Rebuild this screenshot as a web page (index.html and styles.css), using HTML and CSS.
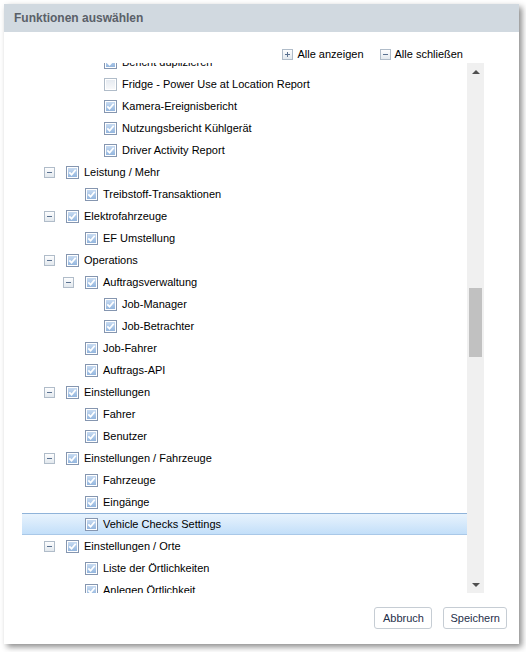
FILE: index.html
```html
<!DOCTYPE html>
<html lang="de">
<head>
<meta charset="utf-8">
<title>Funktionen auswählen</title>
<link rel="stylesheet" href="styles.css">
</head>
<body>
<svg class="defs" width="0" height="0" aria-hidden="true">
  <defs>
    <linearGradient id="g-on" x1="0" y1="0" x2="0" y2="1">
      <stop offset="0" stop-color="#c6daf1"/>
      <stop offset="1" stop-color="#94b6de"/>
    </linearGradient>
    <linearGradient id="g-off" x1="0" y1="0" x2="0" y2="1">
      <stop offset="0" stop-color="#e6ebf1"/>
      <stop offset="1" stop-color="#f7f8fa"/>
    </linearGradient>
    <linearGradient id="g-exp" x1="0" y1="0" x2="0" y2="1">
      <stop offset="0" stop-color="#ffffff"/>
      <stop offset="1" stop-color="#e1e7ed"/>
    </linearGradient>
    <symbol id="cb-on" viewBox="0 0 13 13">
      <rect x="0.5" y="0.5" width="12" height="12" fill="#fff" stroke="#8596b0"/>
      <rect x="2" y="2" width="9" height="9" fill="url(#g-on)"/>
      <path d="M3.3 6.3 L5.6 8.7 L9.7 3.7" stroke="#fff" stroke-width="1.8" fill="none"/>
    </symbol>
    <symbol id="cb-off" viewBox="0 0 13 13">
      <rect x="0.5" y="0.5" width="12" height="12" fill="#fff" stroke="#b0bcc9"/>
      <rect x="2" y="2" width="9" height="9" fill="url(#g-off)"/>
    </symbol>
    <symbol id="ex-minus" viewBox="0 0 11 11">
      <rect x="0.5" y="0.5" width="10" height="10" fill="url(#g-exp)" stroke="#b0bcc9"/>
      <path d="M3 5.5 H8" stroke="#5a7190" stroke-width="1"/>
    </symbol>
    <symbol id="ex-plus" viewBox="0 0 11 11">
      <rect x="0.5" y="0.5" width="10" height="10" fill="url(#g-exp)" stroke="#b0bcc9"/>
      <path d="M3 5.5 H8 M5.5 3 V8" stroke="#5a7190" stroke-width="1"/>
    </symbol>
  </defs>
</svg>

<div class="dialog">
  <div class="dlg-header">Funktionen auswählen</div>

  <div class="toolbar">
    <span class="tool"><svg class="ex" viewBox="0 0 11 11"><use href="#ex-plus"/></svg>Alle anzeigen</span>
    <span class="tool"><svg class="ex" viewBox="0 0 11 11"><use href="#ex-minus"/></svg>Alle schließen</span>
  </div>

  <div class="tree-wrap">
    <div class="tree-view">
      <ul class="tree">
        <li class="row l2"><span class="slot"></span><svg class="cb" viewBox="0 0 13 13"><use href="#cb-on"/></svg><span class="label">Bericht duplizieren</span></li>
        <li class="row l2"><span class="slot"></span><svg class="cb" viewBox="0 0 13 13"><use href="#cb-off"/></svg><span class="label">Fridge - Power Use at Location Report</span></li>
        <li class="row l2"><span class="slot"></span><svg class="cb" viewBox="0 0 13 13"><use href="#cb-on"/></svg><span class="label">Kamera-Ereignisbericht</span></li>
        <li class="row l2"><span class="slot"></span><svg class="cb" viewBox="0 0 13 13"><use href="#cb-on"/></svg><span class="label">Nutzungsbericht Kühlgerät</span></li>
        <li class="row l2"><span class="slot"></span><svg class="cb" viewBox="0 0 13 13"><use href="#cb-on"/></svg><span class="label">Driver Activity Report</span></li>
        <li class="row l0"><span class="slot"><svg class="ex" viewBox="0 0 11 11"><use href="#ex-minus"/></svg></span><svg class="cb" viewBox="0 0 13 13"><use href="#cb-on"/></svg><span class="label">Leistung / Mehr</span></li>
        <li class="row l1"><span class="slot"></span><svg class="cb" viewBox="0 0 13 13"><use href="#cb-on"/></svg><span class="label">Treibstoff-Transaktionen</span></li>
        <li class="row l0"><span class="slot"><svg class="ex" viewBox="0 0 11 11"><use href="#ex-minus"/></svg></span><svg class="cb" viewBox="0 0 13 13"><use href="#cb-on"/></svg><span class="label">Elektrofahrzeuge</span></li>
        <li class="row l1"><span class="slot"></span><svg class="cb" viewBox="0 0 13 13"><use href="#cb-on"/></svg><span class="label">EF Umstellung</span></li>
        <li class="row l0"><span class="slot"><svg class="ex" viewBox="0 0 11 11"><use href="#ex-minus"/></svg></span><svg class="cb" viewBox="0 0 13 13"><use href="#cb-on"/></svg><span class="label">Operations</span></li>
        <li class="row l1"><span class="slot"><svg class="ex" viewBox="0 0 11 11"><use href="#ex-minus"/></svg></span><svg class="cb" viewBox="0 0 13 13"><use href="#cb-on"/></svg><span class="label">Auftragsverwaltung</span></li>
        <li class="row l2"><span class="slot"></span><svg class="cb" viewBox="0 0 13 13"><use href="#cb-on"/></svg><span class="label">Job-Manager</span></li>
        <li class="row l2"><span class="slot"></span><svg class="cb" viewBox="0 0 13 13"><use href="#cb-on"/></svg><span class="label">Job-Betrachter</span></li>
        <li class="row l1"><span class="slot"></span><svg class="cb" viewBox="0 0 13 13"><use href="#cb-on"/></svg><span class="label">Job-Fahrer</span></li>
        <li class="row l1"><span class="slot"></span><svg class="cb" viewBox="0 0 13 13"><use href="#cb-on"/></svg><span class="label">Auftrags-API</span></li>
        <li class="row l0"><span class="slot"><svg class="ex" viewBox="0 0 11 11"><use href="#ex-minus"/></svg></span><svg class="cb" viewBox="0 0 13 13"><use href="#cb-on"/></svg><span class="label">Einstellungen</span></li>
        <li class="row l1"><span class="slot"></span><svg class="cb" viewBox="0 0 13 13"><use href="#cb-on"/></svg><span class="label">Fahrer</span></li>
        <li class="row l1"><span class="slot"></span><svg class="cb" viewBox="0 0 13 13"><use href="#cb-on"/></svg><span class="label">Benutzer</span></li>
        <li class="row l0"><span class="slot"><svg class="ex" viewBox="0 0 11 11"><use href="#ex-minus"/></svg></span><svg class="cb" viewBox="0 0 13 13"><use href="#cb-on"/></svg><span class="label">Einstellungen / Fahrzeuge</span></li>
        <li class="row l1"><span class="slot"></span><svg class="cb" viewBox="0 0 13 13"><use href="#cb-on"/></svg><span class="label">Fahrzeuge</span></li>
        <li class="row l1"><span class="slot"></span><svg class="cb" viewBox="0 0 13 13"><use href="#cb-on"/></svg><span class="label">Eingänge</span></li>
        <li class="row l1 selected"><span class="slot"></span><svg class="cb" viewBox="0 0 13 13"><use href="#cb-on"/></svg><span class="label">Vehicle Checks Settings</span></li>
        <li class="row l0"><span class="slot"><svg class="ex" viewBox="0 0 11 11"><use href="#ex-minus"/></svg></span><svg class="cb" viewBox="0 0 13 13"><use href="#cb-on"/></svg><span class="label">Einstellungen / Orte</span></li>
        <li class="row l1"><span class="slot"></span><svg class="cb" viewBox="0 0 13 13"><use href="#cb-on"/></svg><span class="label">Liste der Örtlichkeiten</span></li>
        <li class="row l1"><span class="slot"></span><svg class="cb" viewBox="0 0 13 13"><use href="#cb-on"/></svg><span class="label">Anlegen Örtlichkeit</span></li>
      </ul>
    </div>
    <div class="scrollbar">
      <div class="sb-btn"><span class="arrow-up"></span></div>
      <div class="sb-track">
        <div class="sb-space-top"></div>
        <div class="sb-thumb"></div>
      </div>
      <div class="sb-btn"><span class="arrow-down"></span></div>
    </div>
  </div>

  <div class="footer">
    <button class="btn">Abbruch</button>
    <button class="btn">Speichern</button>
  </div>
</div>
</body>
</html>
```

FILE: styles.css
```css
html, body {
  margin: 0;
  padding: 0;
  background: #ffffff;
}

body {
  font-family: "Liberation Sans", Arial, sans-serif;
  font-size: 11px;
  color: #000;
  width: 526px;
  height: 652px;
  overflow: hidden;
}

.defs {
  position: absolute;
  width: 0;
  height: 0;
  overflow: hidden;
}

.dialog {
  margin: 4px 0 0 4px;
  width: 515px;
  height: 640px;
  background: #fff;
  box-shadow: 3px 3px 6px rgba(0, 0, 0, 0.45);
  display: flex;
  flex-direction: column;
}

.dlg-header {
  height: 28px;
  line-height: 28px;
  background: #d1d9e0;
  color: #5a6068;
  font-size: 12px;
  font-weight: bold;
  padding-left: 10px;
  flex: none;
}

.toolbar {
  height: 31px;
  flex: none;
  display: flex;
  justify-content: flex-end;
  align-items: flex-start;
  padding-right: 56px;
  box-sizing: border-box;
  padding-top: 16px;
  gap: 16px;
}

.tool {
  display: flex;
  align-items: center;
  gap: 4px;
  line-height: 13px;
}

.ex {
  width: 11px;
  height: 11px;
  display: block;
  flex: none;
}

.tree-wrap {
  height: 530px;
  flex: none;
  display: flex;
  margin-left: 18px;
  width: 462px;
}

.tree-view {
  flex: 1;
  overflow: hidden;
}

.tree {
  list-style: none;
  margin: -12px 0 0 0;
  padding: 0;
}

.row {
  height: 22px;
  display: flex;
  align-items: center;
  box-sizing: border-box;
  white-space: nowrap;
}

.row.l0 { padding-left: 22px; }
.row.l1 { padding-left: 41px; }
.row.l2 { padding-left: 60px; }

.row.selected {
  background: linear-gradient(#e8f3fd, #c3dff9);
  border-top: 1px solid #8fb3d9;
  border-bottom: 1px solid #a9c8e8;
}

.slot {
  width: 22px;
  flex: none;
  display: flex;
  align-items: center;
}

.cb {
  width: 13px;
  height: 13px;
  display: block;
  flex: none;
}

.label {
  margin-left: 5px;
}

.scrollbar {
  width: 17px;
  flex: none;
  background: #f0f0f0;
  display: flex;
  flex-direction: column;
}

.sb-btn {
  height: 17px;
  flex: none;
  display: flex;
  align-items: center;
  justify-content: center;
}

.arrow-up {
  width: 0;
  height: 0;
  border-left: 4px solid transparent;
  border-right: 4px solid transparent;
  border-bottom: 4px solid #505050;
}

.arrow-down {
  width: 0;
  height: 0;
  border-left: 4px solid transparent;
  border-right: 4px solid transparent;
  border-top: 4px solid #505050;
}

.sb-track {
  flex: 1;
  display: flex;
  flex-direction: column;
  align-items: center;
}

.sb-space-top {
  height: 208px;
  flex: none;
}

.sb-thumb {
  width: 13px;
  height: 69px;
  background: #c1c1c1;
}

.footer {
  flex: 1;
  display: flex;
  justify-content: flex-end;
  align-items: flex-start;
  padding: 14px 12px 0 0;
  gap: 11px;
}

.btn {
  height: 22px;
  min-width: 58px;
  padding: 0 6px;
  background: #fff;
  border: 1px solid #c6cdd4;
  border-radius: 3px;
  font-family: "Liberation Sans", Arial, sans-serif;
  font-size: 11px;
  color: #1f2f4a;
  cursor: pointer;
}
```
